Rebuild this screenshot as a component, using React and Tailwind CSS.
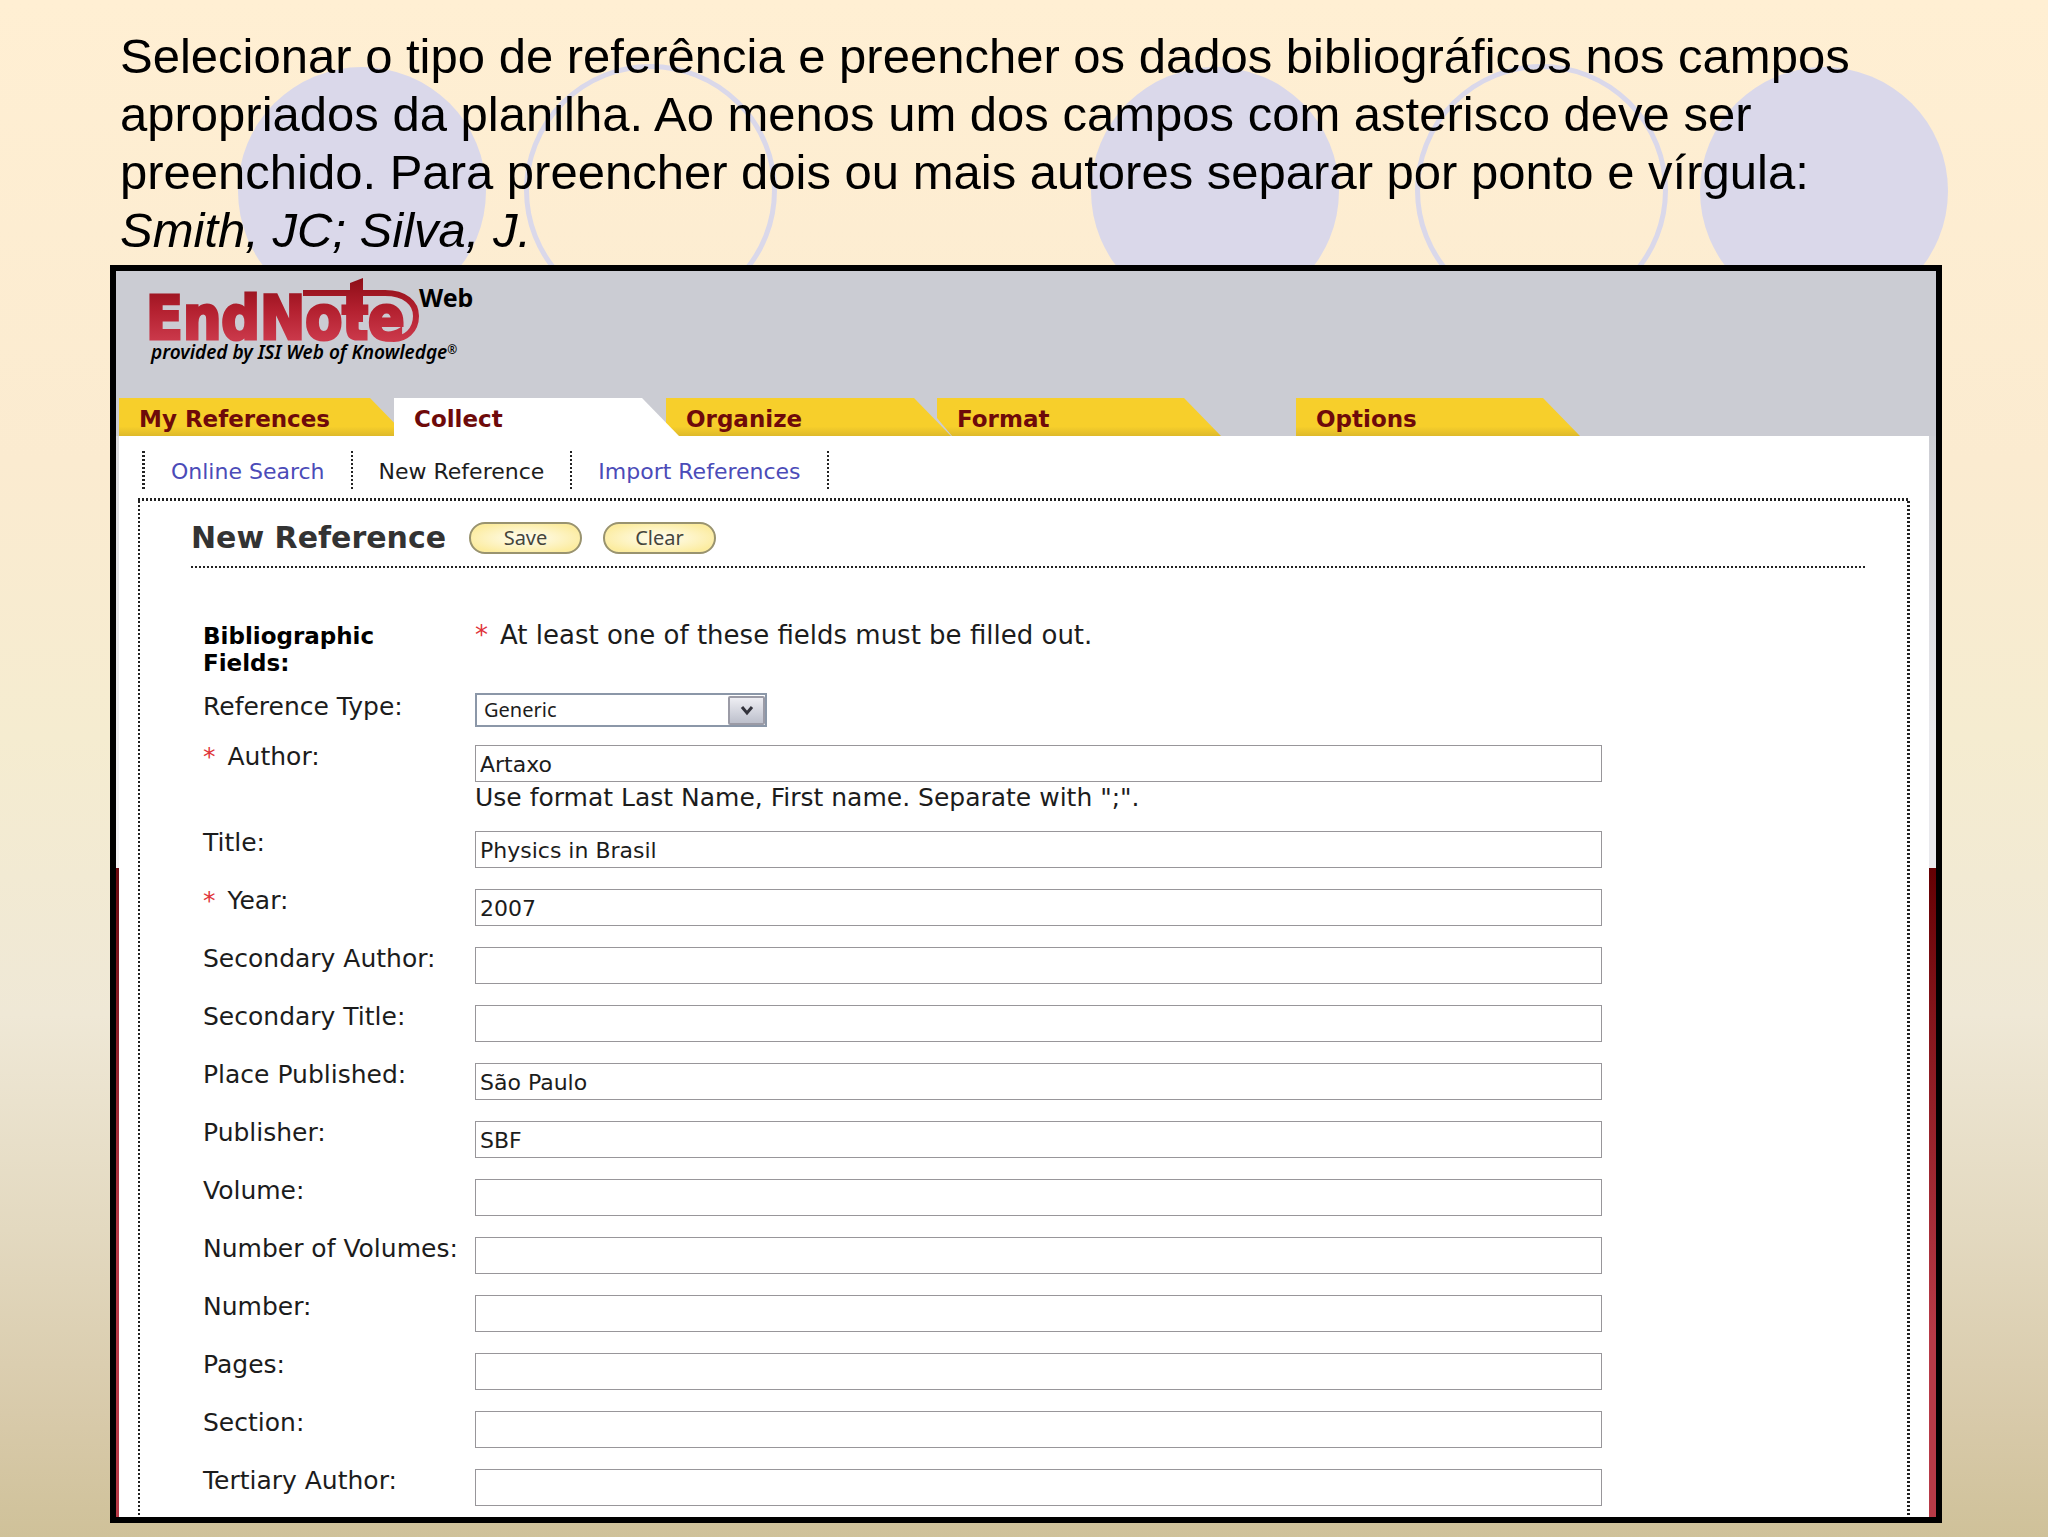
import clsx from "clsx";
import { useState } from "react";

const slanted =
  "[clip-path:polygon(0_0,calc(100%-37px)_0,100%_100%,0_100%)]";
// left corner is cut away where the previous tab's slope comes down
const slantedBoth =
  "[clip-path:polygon(0_0,calc(100%-37px)_0,100%_100%,15px_100%,0_20px)]";

const tabs = [
  { label: "My References", size: "w-[288px]", shape: slanted },
  { label: "Collect", size: "w-[285px] -ml-[13px]", shape: slanted, active: true },
  { label: "Organize", size: "w-[285px] -ml-[13px]", shape: slanted },
  { label: "Format", size: "w-[284px] -ml-[14px]", shape: slantedBoth },
  { label: "Options", size: "w-[284px] ml-[75px]", shape: slanted },
];

const subLinks = ["Online Search", "New Reference", "Import References"];

const fields = [
  {
    name: "author",
    label: "Author",
    required: true,
    value: "Artaxo",
    hint: 'Use format Last Name, First name. Separate with ";".',
  },
  { name: "title", label: "Title", value: "Physics in Brasil" },
  { name: "year", label: "Year", required: true, value: "2007" },
  { name: "secondaryAuthor", label: "Secondary Author", value: "" },
  { name: "secondaryTitle", label: "Secondary Title", value: "" },
  { name: "placePublished", label: "Place Published", value: "São Paulo" },
  { name: "publisher", label: "Publisher", value: "SBF" },
  { name: "volume", label: "Volume", value: "" },
  { name: "numberOfVolumes", label: "Number of Volumes", value: "" },
  { name: "number", label: "Number", value: "" },
  { name: "pages", label: "Pages", value: "" },
  { name: "section", label: "Section", value: "" },
  { name: "tertiaryAuthor", label: "Tertiary Author", value: "" },
];

const DottedX = ({ className }) => (
  <div
    className={clsx(
      "bg-[repeating-linear-gradient(to_right,#222_0_2px,transparent_2px_4px)]",
      className
    )}
  />
);

const DottedY = ({ className }) => (
  <div
    className={clsx(
      "shrink-0 bg-[repeating-linear-gradient(to_bottom,#222_0_2px,transparent_2px_4px)]",
      className
    )}
  />
);

const Circles = () => (
  <div className="absolute inset-0 overflow-hidden" aria-hidden="true">
    <div className="absolute top-[67px] left-[238px] size-[248px] rounded-full bg-[#dad8ea]" />
    <div className="absolute top-[64px] left-[524px] size-[253px] rounded-full border-[5px] border-[#dad8ea]" />
    <div className="absolute top-[67px] left-[1091px] size-[248px] rounded-full bg-[#dad8ea]" />
    <div className="absolute top-[64px] left-[1415px] size-[253px] rounded-full border-[5px] border-[#dad8ea]" />
    <div className="absolute top-[67px] left-[1700px] size-[248px] rounded-full bg-[#dad8ea]" />
  </div>
);

const Logo = () => (
  <svg width="340" height="94" viewBox="0 0 340 94" role="img" aria-label="EndNote Web">
    <defs>
      <linearGradient id="logoRed" gradientUnits="userSpaceOnUse" x1="0" y1="5" x2="0" y2="70">
        <stop offset="0" stopColor="#8c0d16" />
        <stop offset="0.5" stopColor="#b3202f" />
        <stop offset="1" stopColor="#cc3a4c" />
      </linearGradient>
    </defs>
    <text
      x="1"
      y="67"
      fill="url(#logoRed)"
      stroke="url(#logoRed)"
      strokeWidth="3"
      className="font-['DejaVu_Sans_Condensed','Roboto_Condensed',sans-serif] text-[60px] font-bold"
    >
      EndNote
    </text>
    {/* crossbar that loops round the last letter */}
    <path
      d="M158 21H240C260 21 271 31 271 44C271 59 260 67 249 67C243 67 240 67 237 65"
      fill="none"
      stroke="url(#logoRed)"
      strokeWidth="6"
    />
    {/* raised stem of the t */}
    <path d="M205 11L218 6V50H205Z" fill="url(#logoRed)" />
    <text
      x="274"
      y="35"
      className="font-['Noto_Sans',sans-serif] text-[25px] font-bold"
    >
      Web
    </text>
    <text
      x="6"
      y="87"
      className="font-['Noto_Sans',sans-serif] text-[19px] font-semibold italic"
    >
      provided by ISI Web of Knowledge
      <tspan className="text-[12px]" dy="-5">
        ®
      </tspan>
    </text>
  </svg>
);

const Tab = ({ label, size, shape, active }) => (
  <a
    href="#"
    className={clsx(
      "block h-[38px] pl-5 text-[23px] leading-[42px] font-bold text-[#6e0a0a]",
      active
        ? "relative z-10 bg-white"
        : "bg-linear-to-b from-[#f7cf2b] from-75% to-[#deb92a]",
      size,
      shape
    )}
  >
    {label}
  </a>
);

const PillButton = ({ children, ...props }) => (
  <button
    className="h-8 w-[113px] rounded-2xl border-2 border-[#99936f] bg-radial from-[#fffdf2] to-[#fcec9f] to-80% font-['Noto_Sans',sans-serif] text-[20px] leading-7 text-[#45453c]"
    {...props}
  >
    {children}
  </button>
);

const Star = () => <span className="pr-3 text-[#e0343a]">*</span>;

const FieldRow = ({ name, label, required, hint, value, onChange }) => (
  <div className="flex items-start">
    <label htmlFor={name} className="w-[272px] shrink-0 text-[25px] leading-6">
      {required && <Star />}
      {label}:
    </label>
    <div className="flex-1">
      <input
        id={name}
        name={name}
        type="text"
        value={value}
        onChange={onChange}
        className="block h-[37px] w-full border border-[#98969a] bg-white px-1 pt-0.5 text-[22px] outline-none"
      />
      {hint && <p className="mt-1 text-[25px] leading-6">{hint}</p>}
    </div>
  </div>
);

const ReferenceForm = () => {
  const [values, setValues] = useState(
    Object.fromEntries(fields.map((f) => [f.name, f.value]))
  );

  const handleClear = () =>
    setValues(Object.fromEntries(fields.map((f) => [f.name, ""])));

  return (
    <form
      className="flex-1 pt-[21px] pb-[11px]"
      onSubmit={(e) => e.preventDefault()}
    >
      <div className="mr-[42px] ml-[51px]">
        <div className="flex items-center pb-3">
          <h1 className="w-[278px] text-[30px] leading-8 font-bold text-[#333]">
            New Reference
          </h1>
          <div className="flex gap-[21px]">
            <PillButton type="submit">Save</PillButton>
            <PillButton type="button" onClick={handleClear}>
              Clear
            </PillButton>
          </div>
        </div>
        <DottedX className="h-[2px]" />
      </div>

      <div className="mt-[55px] mr-[305px] ml-[63px] text-[#1c1c1c]">
        <div className="flex items-start">
          <h2 className="w-[272px] shrink-0 text-[23px] leading-[27px] font-bold text-black">
            Bibliographic
            <br />
            Fields:
          </h2>
          <p className="text-[26px] leading-6">
            <Star />
            At least one of these fields must be filled out.
          </p>
        </div>

        <div className="mt-4 flex items-start">
          <label
            htmlFor="referenceType"
            className="w-[272px] shrink-0 pt-0.5 text-[25px] leading-6"
          >
            Reference Type:
          </label>
          <div className="relative w-[292px]">
            <select
              id="referenceType"
              className="block h-[34px] w-full appearance-none border-2 border-[#8b97a8] bg-white pl-[7px] font-['Noto_Sans',sans-serif] text-[20px] leading-7 outline-none"
            >
              <option>Generic</option>
            </select>
            <div className="pointer-events-none absolute top-[3px] right-[2px] flex h-[29px] w-[37px] items-center justify-center rounded-xs border-2 border-[#9b9ba6] bg-linear-to-b from-[#eeeef3] to-[#bdc0cc]">
              <svg width="14" height="11" viewBox="0 0 14 11" aria-hidden="true">
                <path d="M2 2L7 8L12 2" fill="none" stroke="#33333c" strokeWidth="3" />
              </svg>
            </div>
          </div>
        </div>

        <div className="mt-[18px] flex flex-col gap-[21px]">
          {fields.map((field) => (
            <FieldRow
              key={field.name}
              {...field}
              value={values[field.name]}
              onChange={(e) =>
                setValues({ ...values, [field.name]: e.target.value })
              }
            />
          ))}
        </div>
      </div>
    </form>
  );
};

const App = () => {
  return (
    <div className="relative min-h-screen bg-[linear-gradient(to_bottom,#ffefd3_0%,#fbebd0_30%,#f5ecd0_48%,#efe8d6_66%,#e3d9c0_80%,#d8caaa_92%,#cfc199_100%)] px-[110px] pt-[27px] pb-[13px] font-['DejaVu_Sans',sans-serif] text-black">
      <Circles />
      <div className="relative -mr-1">
        <p className="pr-20 pl-[10px] font-['Liberation_Sans',sans-serif] text-[49px] leading-[58px]">
          Selecionar o tipo de referência e preencher os dados bibliográficos nos
          campos apropriados da planilha. Ao menos um dos campos com asterisco
          deve ser preenchido. Para preencher dois ou mais autores separar por
          ponto e vírgula:
          <br />
          <em>Smith, JC; Silva, J.</em>
        </p>

        <main className="mt-[6px] border-6 border-black bg-white">
          <header className="bg-[#cbccd3] pl-[3px]">
            <div className="pt-px pb-8 pl-[26px]">
              <Logo />
            </div>
            <nav className="flex">
              {tabs.map((tab) => (
                <Tab key={tab.label} {...tab} />
              ))}
            </nav>
          </header>

          <div className="flex">
            <div className="w-[3px] bg-[linear-gradient(to_bottom,#dcdce0_0,#f4f4f6_432px,#6b0a10_432px,#b73a47_800px)]" />
            <div className="flex-1 px-[19px] pt-[15px]">
              <nav className="ml-1 flex h-[38px] text-[22px] leading-[41px]">
                <DottedY className="w-[3px]" />
                {subLinks.map((link) => (
                  <div key={link} className="flex">
                    <a
                      href="#"
                      className={clsx(
                        "px-[26px]",
                        link === "New Reference" ? "text-[#1c1c1c]" : "text-[#4b4bb8]"
                      )}
                    >
                      {link}
                    </a>
                    <DottedY className="w-[2px]" />
                  </div>
                ))}
              </nav>
              <DottedX className="mt-[9px] h-[3px]" />
              <div className="flex">
                <DottedY className="w-[2px]" />
                <ReferenceForm />
                <DottedY className="w-[3px]" />
              </div>
            </div>
            <div className="w-[7px] bg-[linear-gradient(to_bottom,#cdced4_0,#e9e9ed_300px,#e9e9ed_432px,#640003_432px,#84151b_580px,#b73a47_900px)]" />
          </div>
        </main>
      </div>
    </div>
  );
};

export default App;
